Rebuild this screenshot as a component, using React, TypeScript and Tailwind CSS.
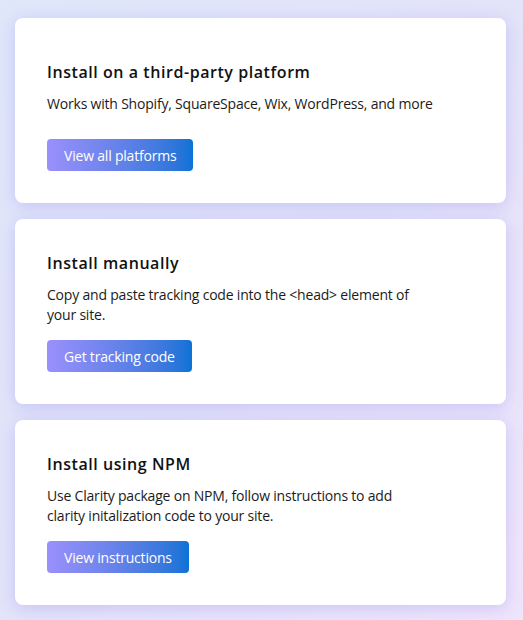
import React from "react";

type Option = {
  title: string;
  lines: string[];
  action: string;
};

const options: Option[] = [
  {
    title: "Install on a third-party platform",
    lines: ["Works with Shopify, SquareSpace, Wix, WordPress, and more"],
    action: "View all platforms",
  },
  {
    title: "Install manually",
    lines: ["Copy and paste tracking code into the <head> element of", "your site."],
    action: "Get tracking code",
  },
  {
    title: "Install using NPM",
    lines: [
      "Use Clarity package on NPM, follow instructions to add",
      "clarity initalization code to your site.",
    ],
    action: "View instructions",
  },
];

function OptionCard({ title, lines, action }: Option) {
  return (
    <div className="flex h-[185px] w-[491px] flex-col justify-end rounded-lg bg-white px-8 pb-8 shadow-[0_3px_16px_rgba(120,105,240,0.26)]">
      <h2 className="text-[16px] font-semibold leading-6 tracking-[0.035em] text-[#111]">
        {title}
      </h2>
      <p className="mt-[10px] min-h-[30px] text-[14px] leading-5 tracking-[-0.2px] text-[#1b1b1b]">
        {lines.map((line, i) => (
          <React.Fragment key={i}>
            {i > 0 && <br />}
            {line}
          </React.Fragment>
        ))}
      </p>
      <div className="mt-[15px]">
        <button
          type="button"
          className="h-8 rounded-[4px] bg-gradient-to-r from-[#9a90fb] to-[#0872d6] px-[17px] text-[14px] font-medium tracking-[-0.2px] text-white"
        >
          {action}
        </button>
      </div>
    </div>
  );
}

export default function App() {
  return (
    <div
      className="flex min-h-[620px] w-[523px] flex-col gap-4 bg-gradient-to-br from-[#dfe7f9] via-[#e3e3f9] to-[#eee5fb] px-[15px] pt-[18px] pb-4"
      style={{ fontFamily: '"Open Sans", "Noto Sans", sans-serif' }}
    >
      {options.map((o) => (
        <OptionCard key={o.title} {...o} />
      ))}
    </div>
  );
}
